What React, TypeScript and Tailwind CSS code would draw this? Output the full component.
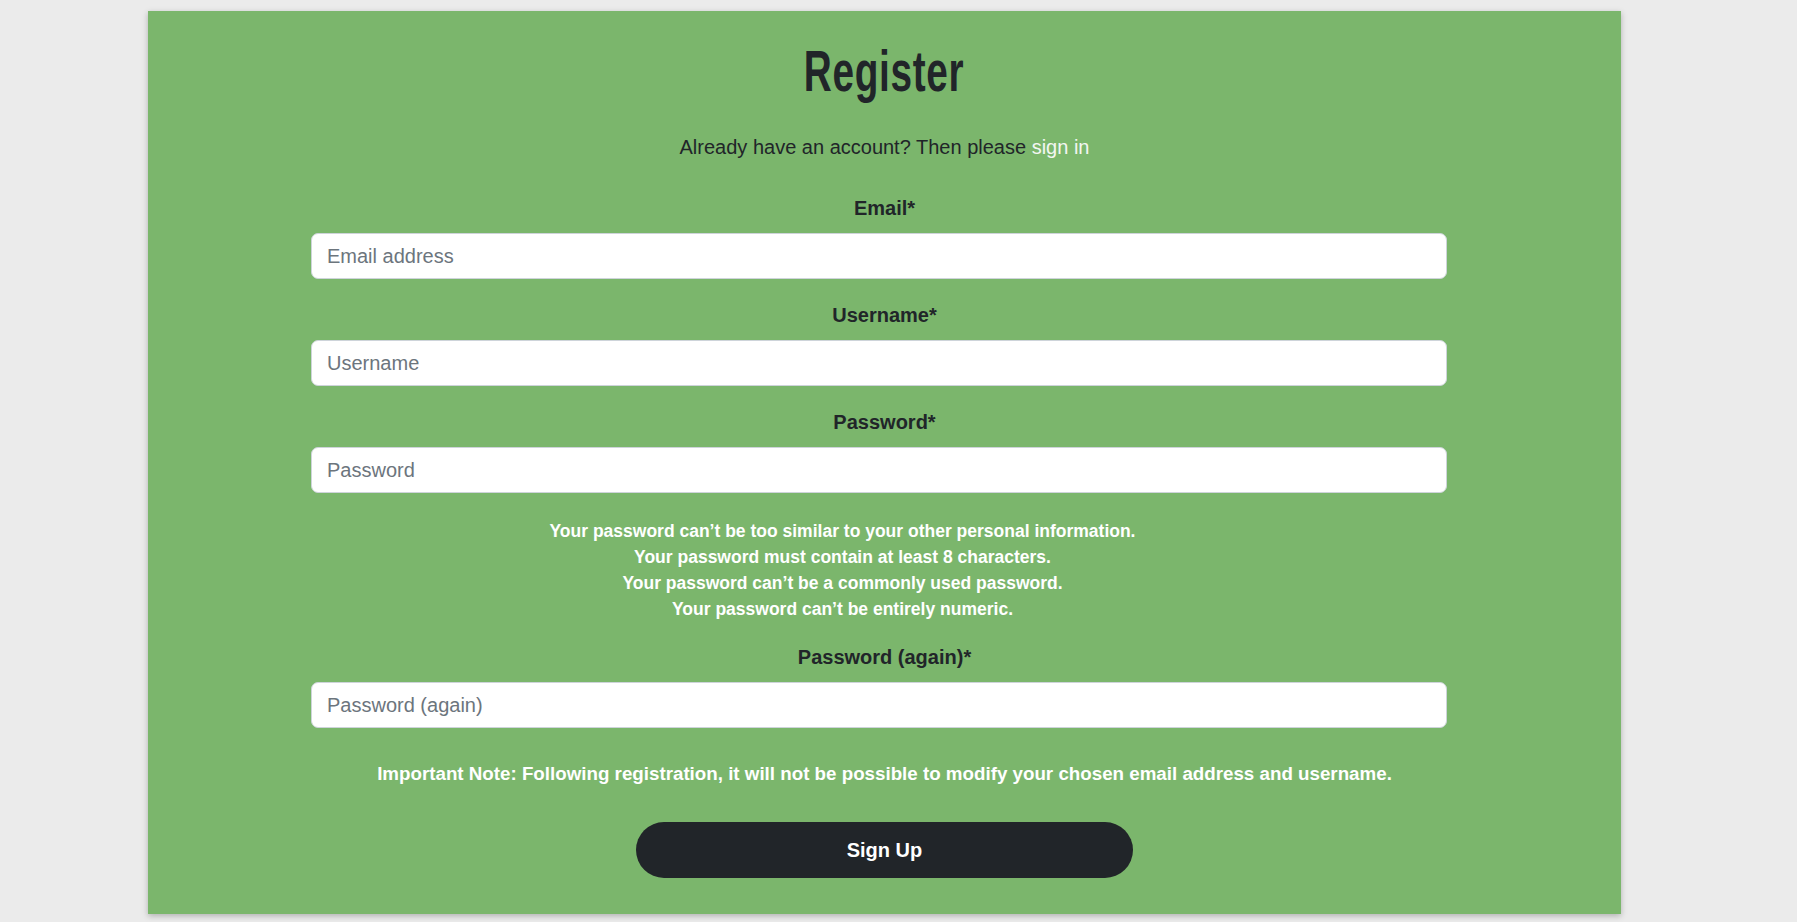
import React from "react";

// ─── Data ─────────────────────────────────────────────────────────────────────

const FIELDS = [
  { id: "email", label: "Email*", placeholder: "Email address", type: "email" },
  { id: "username", label: "Username*", placeholder: "Username", type: "text" },
  { id: "password1", label: "Password*", placeholder: "Password", type: "password" },
];

const PASSWORD_HELP = [
  "Your password can’t be too similar to your other personal information.",
  "Your password must contain at least 8 characters.",
  "Your password can’t be a commonly used password.",
  "Your password can’t be entirely numeric.",
];

// ─── Pieces ───────────────────────────────────────────────────────────────────

function Field({ label, placeholder, type }: { label: string; placeholder: string; type: string }) {
  return (
    <div className="flex flex-col">
      <label className="text-center text-[20px] leading-[30px] font-bold text-[#212529]">{label}</label>
      <div className="mt-[10px] ml-[163px] mr-[174px]">
        <input
          type={type}
          placeholder={placeholder}
          className="block w-full h-[46px] rounded-[7px] border border-[#ced4da] bg-white px-[15px] text-[20px] text-[#212529] placeholder:text-[#6c757d] outline-none"
        />
      </div>
    </div>
  );
}

// ─── Component ────────────────────────────────────────────────────────────────

export default function App() {
  return (
    <main
      className="min-h-screen bg-[#ebebeb] pt-[11px] pl-[148px]"
      style={{ fontFamily: '"Liberation Sans", Arial, sans-serif' }}
    >
      <section className="w-[1473px] h-[903px] bg-[#7bb66c] shadow-[0_2px_6px_rgba(0,0,0,0.25)] pt-[30px] flex flex-col">
        {/* Heading */}
        <div className="flex justify-center h-[60px]">
          <h1 className="text-[57px] leading-[60px] font-bold tracking-[1px] text-[#212529] scale-x-[0.68]">
            Register
          </h1>
        </div>

        <p className="mt-[31px] text-center text-[20px] leading-[30px] text-[#212529]">
          Already have an account? Then please{" "}
          <a href="#" className="text-[#f3f6f2]">
            sign in
          </a>
        </p>

        <form className="mt-[31px] flex flex-col">
          <div className="flex flex-col gap-[21px]">
            {FIELDS.map((f) => (
              <Field key={f.id} {...f} />
            ))}
          </div>

          {/* Password rules */}
          <ul className="mt-[25px] ml-[163px] mr-[247px] text-center text-[17.5px] leading-[26px] font-bold text-white">
            {PASSWORD_HELP.map((line) => (
              <li key={line}>{line}</li>
            ))}
          </ul>

          <div className="mt-[20px]">
            <Field label="Password (again)*" placeholder="Password (again)" type="password" />
          </div>

          <p className="mt-[31px] text-center text-[18.75px] leading-[30px] font-bold text-white">
            Important Note: Following registration, it will not be possible to modify your chosen email address and
            username.
          </p>

          <div className="mt-[33px] flex justify-center">
            <button
              type="button"
              className="w-[497px] h-[56px] rounded-full bg-[#212529] text-white text-[20px] font-bold"
            >
              Sign Up
            </button>
          </div>
        </form>
      </section>
    </main>
  );
}
